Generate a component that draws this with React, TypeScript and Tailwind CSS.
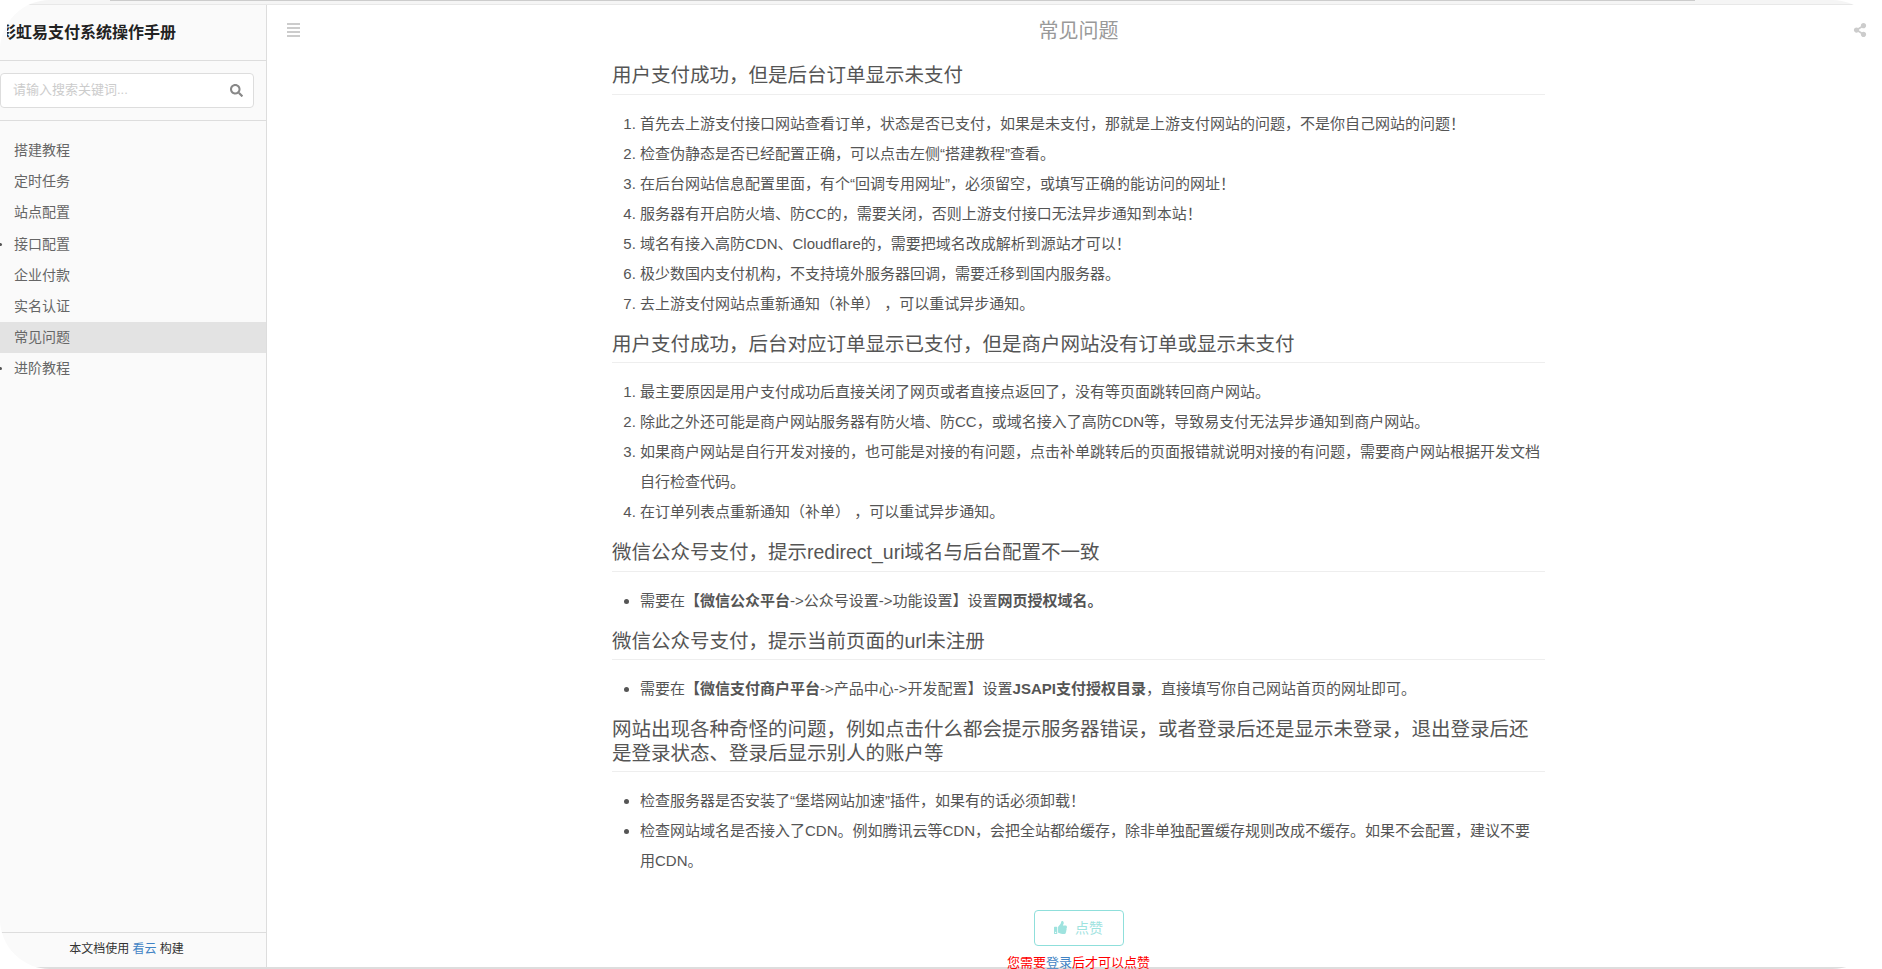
import { FaSearch, FaShareAlt, FaThumbsUp } from "react-icons/fa";

const navItems = [
  { label: "搭建教程" },
  { label: "定时任务" },
  { label: "站点配置" },
  { label: "接口配置", dot: true },
  { label: "企业付款" },
  { label: "实名认证" },
  { label: "常见问题", active: true },
  { label: "进阶教程", dot: true },
];

function H2({ children }: { children: React.ReactNode }) {
  return (
    <h2 className="mb-[14px] mt-[14.1px] border-b border-[#eee] pb-[6px] text-[19.5px] leading-[23.4px] font-normal text-[#555]">
      {children}
    </h2>
  );
}

export default function App() {
  return (
    <div
      className="h-[969px] w-[1882px] overflow-hidden bg-white text-[15px] leading-[30px] text-[#555]"
      style={{ fontFamily: '"Liberation Sans", "Noto Sans CJK SC", sans-serif' }}
    >
      <div className="relative flex h-[969px] flex-col overflow-hidden rounded-[50px] bg-white">
        <div className="h-[4px] shrink-0 bg-[#f5f5f5]" />
        <div className="h-px shrink-0 bg-[#e8e8e8]" />
        <div className="flex min-h-0 flex-1">
          <aside className="flex w-[267px] shrink-0 flex-col border-r border-[#ddd] bg-[#fafafa]">
            <div className="flex h-[56px] shrink-0 items-center border-b border-[#ddd] text-[16px] font-bold text-[#222]">
              <div className="ml-[7px] overflow-hidden whitespace-nowrap">
                <span className="-ml-[7px] block">彩虹易支付系统操作手册</span>
              </div>
            </div>
            <div className="flex h-[60px] shrink-0 items-center border-b border-[#ddd]">
              <div className="flex h-[35px] w-[254px] items-center justify-between rounded-[4px] border border-[#ddd] bg-white pl-[12px] pr-[10px]">
                <span className="pb-[2px] text-[13px] text-[#ccc]">请输入搜索关键词...</span>
                <FaSearch size={13} className="text-[#888]" />
              </div>
            </div>
            <ul className="mt-[14px] flex-1 text-[14px] text-[#666]">
              {navItems.map((n) => (
                <li
                  key={n.label}
                  className={`relative h-[31.2px] pl-[14px] leading-[31px] ${n.active ? "bg-[#e3e3e3]" : ""}`}
                >
                  {n.dot && <span className="absolute -left-px top-[14px] h-[3px] w-[3px] rounded-full bg-[#555]" />}
                  {n.label}
                </li>
              ))}
            </ul>
            <div className="h-[35px] shrink-0 border-t border-[#ddd] pr-[13px] text-center text-[12px] leading-[33px] text-[#333]">
              本文档使用 <span className="text-[#4183c4]">看云</span> 构建
            </div>
          </aside>
          <main className="relative min-w-0 flex-1">
            <div className="absolute left-[20px] top-[18px] flex w-[13px] flex-col gap-[2px]">
              {[0, 1, 2, 3].map((i) => (
                <span key={i} className="h-[2px] bg-[#ccc]" />
              ))}
            </div>
            <FaShareAlt size={14} className="absolute right-[15px] top-[18px] text-[#ccc]" />
            <h1 className="ml-[345px] w-[933px] pb-[5px] pt-[12px] text-center text-[20px] leading-[28px] font-normal text-[#999]">
              常见问题
            </h1>
            <article className="ml-[345px] w-[933px]">
              <H2>用户支付成功，但是后台订单显示未支付</H2>
              <ol className="list-decimal pl-[28px]">
                <li>首先去上游支付接口网站查看订单，状态是否已支付，如果是未支付，那就是上游支付网站的问题，不是你自己网站的问题！</li>
                <li>检查伪静态是否已经配置正确，可以点击左侧“搭建教程”查看。</li>
                <li>在后台网站信息配置里面，有个“回调专用网址”，必须留空，或填写正确的能访问的网址！</li>
                <li>服务器有开启防火墙、防CC的，需要关闭，否则上游支付接口无法异步通知到本站！</li>
                <li>域名有接入高防CDN、Cloudflare的，需要把域名改成解析到源站才可以！</li>
                <li>极少数国内支付机构，不支持境外服务器回调，需要迁移到国内服务器。</li>
                <li>去上游支付网站点重新通知（补单） ，可以重试异步通知。</li>
              </ol>
              <H2>用户支付成功，后台对应订单显示已支付，但是商户网站没有订单或显示未支付</H2>
              <ol className="list-decimal pl-[28px]">
                <li>最主要原因是用户支付成功后直接关闭了网页或者直接点返回了，没有等页面跳转回商户网站。</li>
                <li>除此之外还可能是商户网站服务器有防火墙、防CC，或域名接入了高防CDN等，导致易支付无法异步通知到商户网站。</li>
                <li>如果商户网站是自行开发对接的，也可能是对接的有问题，点击补单跳转后的页面报错就说明对接的有问题，需要商户网站根据开发文档自行检查代码。</li>
                <li>在订单列表点重新通知（补单） ，可以重试异步通知。</li>
              </ol>
              <H2>微信公众号支付，提示redirect_uri域名与后台配置不一致</H2>
              <ul className="list-disc pl-[28px]">
                <li>需要在<b>【微信公众平台</b>-&gt;公众号设置-&gt;功能设置】设置<b>网页授权域名。</b></li>
              </ul>
              <H2>微信公众号支付，提示当前页面的url未注册</H2>
              <ul className="list-disc pl-[28px]">
                <li>需要在<b>【微信支付商户平台</b>-&gt;产品中心-&gt;开发配置】设置<b>JSAPI支付授权目录</b>，直接填写你自己网站首页的网址即可。</li>
              </ul>
              <H2>网站出现各种奇怪的问题，例如点击什么都会提示服务器错误，或者登录后还是显示未登录，退出登录后还是登录状态、登录后显示别人的账户等</H2>
              <ul className="list-disc pl-[28px]">
                <li>检查服务器是否安装了“堡塔网站加速”插件，如果有的话必须卸载！</li>
                <li>检查网站域名是否接入了CDN。例如腾讯云等CDN，会把全站都给缓存，除非单独配置缓存规则改成不缓存。如果不会配置，建议不要<br />用CDN。</li>
              </ul>
            </article>
            <div className="ml-[345px] mt-[34px] flex w-[933px] flex-col items-center">
              <div className="flex h-[36px] w-[90px] items-center justify-center gap-[8px] rounded-[4px] border border-[#8fdfdb] text-[14px] text-[#9fe3df]">
                <FaThumbsUp size={13} />
                点赞
              </div>
              <div className="mt-[9px] text-[13px] leading-[16px] text-[#f00]">
                您需要<span className="text-[#4183c4]">登录</span>后才可以点赞
              </div>
            </div>
          </main>
        </div>
        <div className="h-[2px] shrink-0 bg-[#ddd]" />
        <div className="absolute left-[110px] top-0 h-px w-[1585px] bg-[#ccc]" />
      </div>
    </div>
  );
}
